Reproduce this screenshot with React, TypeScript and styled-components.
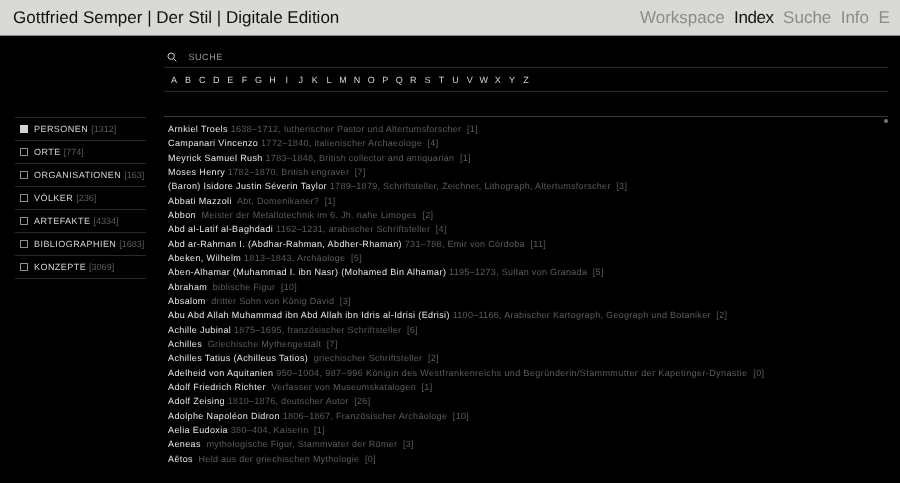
import React from 'react';
import styled, { createGlobalStyle } from 'styled-components';

const Global = createGlobalStyle`
  html, body { margin: 0; padding: 0; background: #000; }
  body { width: 900px; height: 483px; overflow: hidden; font-family: "Liberation Sans", Arial, sans-serif; text-rendering: geometricPrecision; -webkit-font-smoothing: antialiased; }
`;
const Page = styled.div`display: flex; flex-direction: column; width: 900px; height: 483px; background: #000; overflow: hidden;`;
const Header = styled.header`
  display: flex; align-items: center; justify-content: space-between; flex: none; box-sizing: border-box;
  height: 36px; padding: 1px 10px 0 13px; background: #d9dad5; border-bottom: 1px solid #8a8b88;
`;
const Title = styled.h1`margin: 0; font-size: 17px; font-weight: 400; color: #111; will-change: transform;`;
const Nav = styled.nav`display: flex; gap: 9.4px; font-size: 17px; will-change: transform;`;
const NavItem = styled.a<{ $active?: boolean }>`
  color: ${p => (p.$active ? '#111' : '#8b8c89')};
  letter-spacing: ${p => (p.$active ? '-0.4px' : '0')};
`;
const Body = styled.div`display: flex; flex: 1; min-height: 0; padding: 0 12px 0 15px; gap: 18px;`;
const Side = styled.aside`flex: none; width: 131px; padding-top: 81px; will-change: transform;`;
const Filter = styled.div`
  display: flex; align-items: center; gap: 6px; height: 22px; padding-left: 5px;
  border-top: 1px solid #2a2a2a; &:last-child { border-bottom: 1px solid #2a2a2a; }
  font-size: 9px; letter-spacing: 0.45px; color: #d4d4d0;
`;
const Check = styled.span<{ $on?: boolean }>`
  flex: none; width: 8px; height: 8px; box-sizing: border-box;
  border: 1px solid ${p => (p.$on ? '#d4d4d0' : '#8f8f8c')};
  background: ${p => (p.$on ? '#d4d4d0' : 'transparent')};
`;
const Count = styled.span`color: #5c5c5a; margin-left: 3px; letter-spacing: 0;`;
const Main = styled.main`flex: 1; min-width: 0; position: relative; will-change: transform;`;
const SearchRow = styled.div`
  display: flex; align-items: center; gap: 12px; height: 32px; padding: 10px 0 0 2.5px; box-sizing: border-box;
  border-bottom: 1px solid #2a2a2a; font-size: 9px; letter-spacing: 0.55px; color: #9a9a97;
`;
const Letters = styled.div`
  display: flex; height: 24px; box-sizing: border-box; align-items: center; padding-left: 3px;
  border-bottom: 1px solid #2a2a2a; font-size: 9px; color: #d4d4d0;
`;
const Letter = styled.span`width: 14.08px; flex: none; text-align: center;`;
const Spacer = styled.div`height: 25px; box-sizing: border-box; border-bottom: 1px solid #3a3a3a;`;
const List = styled.ul`list-style: none; margin: 0; padding: 5px 0 0 4px;`;
const Row = styled.li`height: 14.33px; line-height: 14.33px; font-size: 9px; letter-spacing: 0.38px; white-space: nowrap; color: #e6e6e2;`;
const Note = styled.span<{ $wide?: boolean }>`color: #5c5c5a; white-space: pre; letter-spacing: ${p => (p.$wide ? '0.4px' : '0.3px')};`;
const Dot = styled.span`position: absolute; right: 0; top: 83px; width: 4px; height: 4px; border-radius: 50%; background: #77776f;`;

const letters = 'ABCDEFGHIJKLMNOPQRSTUVWXYZ'.split('');
const filters: [string, string][] = [
  ['PERSONEN', '[1312]'], ['ORTE', '[774]'], ['ORGANISATIONEN', '[163]'], ['VÖLKER', '[236]'],
  ['ARTEFAKTE', '[4334]'], ['BIBLIOGRAPHIEN', '[1683]'], ['KONZEPTE', '[3069]'],
];
const rows: [string, string][] = [
  ['Arnkiel Troels', ' 1638–1712, lutherischer Pastor und Altertumsforscher  [1]'],
  ['Campanari Vincenzo', ' 1772–1840, italienischer Archaeologe  [4]'],
  ['Meyrick Samuel Rush', ' 1783–1848, British collector and antiquarian  [1]'],
  ['Moses Henry', ' 1782–1870, British engraver  [7]'],
  ['(Baron) Isidore Justin Séverin Taylor', ' 1789–1879, Schriftsteller, Zeichner, Lithograph, Altertumsforscher  [3]'],
  ['Abbati Mazzoli', '  Abt, Domenikaner?  [1]'],
  ['Abbon', '  Meister der Metallotechnik im 6. Jh. nahe Limoges  [2]'],
  ['Abd al-Latif al-Baghdadi', ' 1162–1231, arabischer Schriftsteller  [4]'],
  ['Abd ar-Rahman I. (Abdhar-Rahman, Abdher-Rhaman)', ' 731–788, Emir von Córdoba  [11]'],
  ['Abeken, Wilhelm', ' 1813–1843, Archäologe  [5]'],
  ['Aben-Alhamar (Muhammad I. ibn Nasr) (Mohamed Bin Alhamar)', ' 1195–1273, Sultan von Granada  [5]'],
  ['Abraham', '  biblische Figur  [10]'],
  ['Absalom', '  dritter Sohn von König David  [3]'],
  ['Abu Abd Allah Muhammad ibn Abd Allah ibn Idris al-Idrisi (Edrisi)', ' 1100–1166, Arabischer Kartograph, Geograph und Botaniker  [2]'],
  ['Achille Jubinal', ' 1875–1695, französischer Schriftsteller  [6]'],
  ['Achilles', '  Griechische Mythengestalt  [7]'],
  ['Achilles Tatius (Achilleus Tatios)', '  griechischer Schriftsteller  [2]'],
  ['Adelheid von Aquitanien', ' 950–1004, 987–996 Königin des Westfrankenreichs und Begründerin/Stammmutter der Kapetinger-Dynastie  [0]'],
  ['Adolf Friedrich Richter', '  Verfasser von Museumskatalogen  [1]'],
  ['Adolf Zeising', ' 1810–1876, deutscher Autor  [26]'],
  ['Adolphe Napoléon Didron', ' 1806–1867, Französischer Archäologe  [10]'],
  ['Aelia Eudoxia', ' 380–404, Kaiserin  [1]'],
  ['Aeneas', '  mythologische Figur, Stammvater der Römer  [3]'],
  ['Aëtos', '  Held aus der griechischen Mythologie  [0]'],
];

export default function App() {
  return (
    <Page>
      <Global />
      <Header>
        <Title>Gottfried Semper | Der Stil | Digitale Edition</Title>
        <Nav>
          <NavItem>Workspace</NavItem>
          <NavItem $active>Index</NavItem>
          <NavItem>Suche</NavItem>
          <NavItem>Info</NavItem>
          <NavItem>E</NavItem>
        </Nav>
      </Header>
      <Body>
        <Side>
          {filters.map(([n, c], i) => (
            <Filter key={n}><Check $on={i === 0} /><span>{n}<Count>{c}</Count></span></Filter>
          ))}
        </Side>
        <Main>
          <SearchRow>
            <svg width="10" height="10" viewBox="0 0 10 10" fill="none" stroke="#d4d4d0" strokeWidth="1">
              <circle cx="4.2" cy="4.2" r="3.2" /><path d="M6.6 6.6 9.4 9.4" />
            </svg>
            <span>SUCHE</span>
          </SearchRow>
          <Letters>{letters.map(l => <Letter key={l}>{l}</Letter>)}</Letters>
          <Spacer />
          <List>
            {rows.map(([n, d]) => <Row key={n}>{n}<Note $wide={d.length > 90}>{d}</Note></Row>)}
          </List>
          <Dot />
        </Main>
      </Body>
    </Page>
  );
}
